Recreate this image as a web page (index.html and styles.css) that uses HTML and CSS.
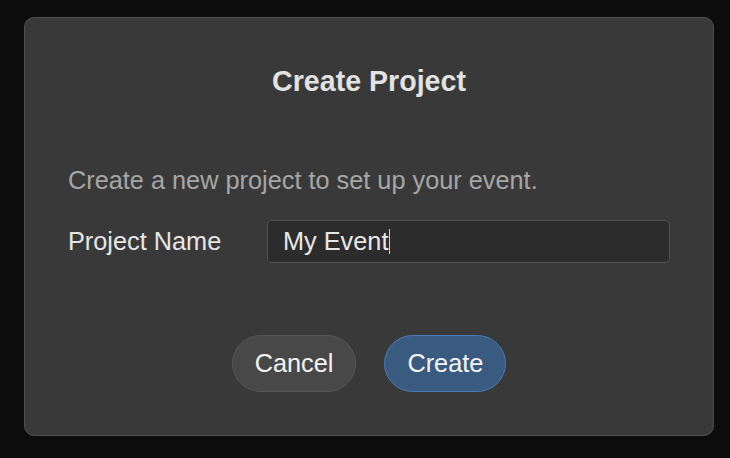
FILE: index.html
```html
<!DOCTYPE html>
<html lang="en">
<head>
<meta charset="utf-8">
<title>Create Project</title>
<link rel="stylesheet" href="styles.css">
</head>
<body>
<div class="page">
  <div class="dialog">
    <h1 class="title">Create Project</h1>
    <p class="desc">Create a new project to set up your event.</p>
    <div class="field">
      <label class="label">Project Name</label>
      <div class="input"><span class="value">My Event</span><span class="caret"></span></div>
    </div>
    <div class="actions">
      <button class="btn btn-cancel">Cancel</button>
      <button class="btn btn-create">Create</button>
    </div>
  </div>
</div>
</body>
</html>
```
FILE: styles.css
```css
html, body {
  margin: 0;
  padding: 0;
  background: #0c0c0c;
  font-family: "Liberation Sans", Arial, sans-serif;
}
.page {
  width: 730px;
  height: 458px;
  padding: 17px 16px 0 24px;
  box-sizing: border-box;
}
.dialog {
  width: 690px;
  height: 419px;
  box-sizing: border-box;
  background: #393939;
  border: 1px solid #4f4f4f;
  border-radius: 10px;
  padding: 47px 43px 0 43px;
  display: flex;
  flex-direction: column;
}
.title {
  margin: 0;
  font-size: 28.6px;
  line-height: 32px;
  font-weight: bold;
  color: #e2e2e2;
  text-align: center;
}
.desc {
  margin: 69px 0 0 0;
  font-size: 25.3px;
  line-height: 29px;
  color: #a6a6a6;
}
.field {
  margin-top: 25px;
  display: grid;
  grid-template-columns: 199px 1fr;
  align-items: center;
}
.label {
  font-size: 25.3px;
  line-height: 29px;
  color: #e6e6e6;
}
.input {
  height: 43px;
  box-sizing: border-box;
  background: #2c2c2c;
  border: 1px solid #525252;
  border-radius: 5px;
  padding: 6px 15px;
  font-size: 25.3px;
  line-height: 29px;
  color: #e8e8e8;
  display: flex;
  align-items: center;
}
.caret {
  display: inline-block;
  width: 1px;
  height: 25px;
  background: #d0d0d0;
  margin-left: 1px;
}
.actions {
  margin-top: 72px;
  display: flex;
  justify-content: center;
  gap: 28px;
}
.btn {
  font-family: "Liberation Sans", Arial, sans-serif;
  font-size: 25.3px;
  line-height: 29px;
  padding: 13px 22px;
  border-radius: 29px;
  color: #f4f4f4;
  cursor: pointer;
}
.btn-cancel {
  background: #484848;
  border: 1px solid #565656;
}
.btn-create {
  background: #3a5b80;
  border: 1px solid #4a7bb6;
}
```
